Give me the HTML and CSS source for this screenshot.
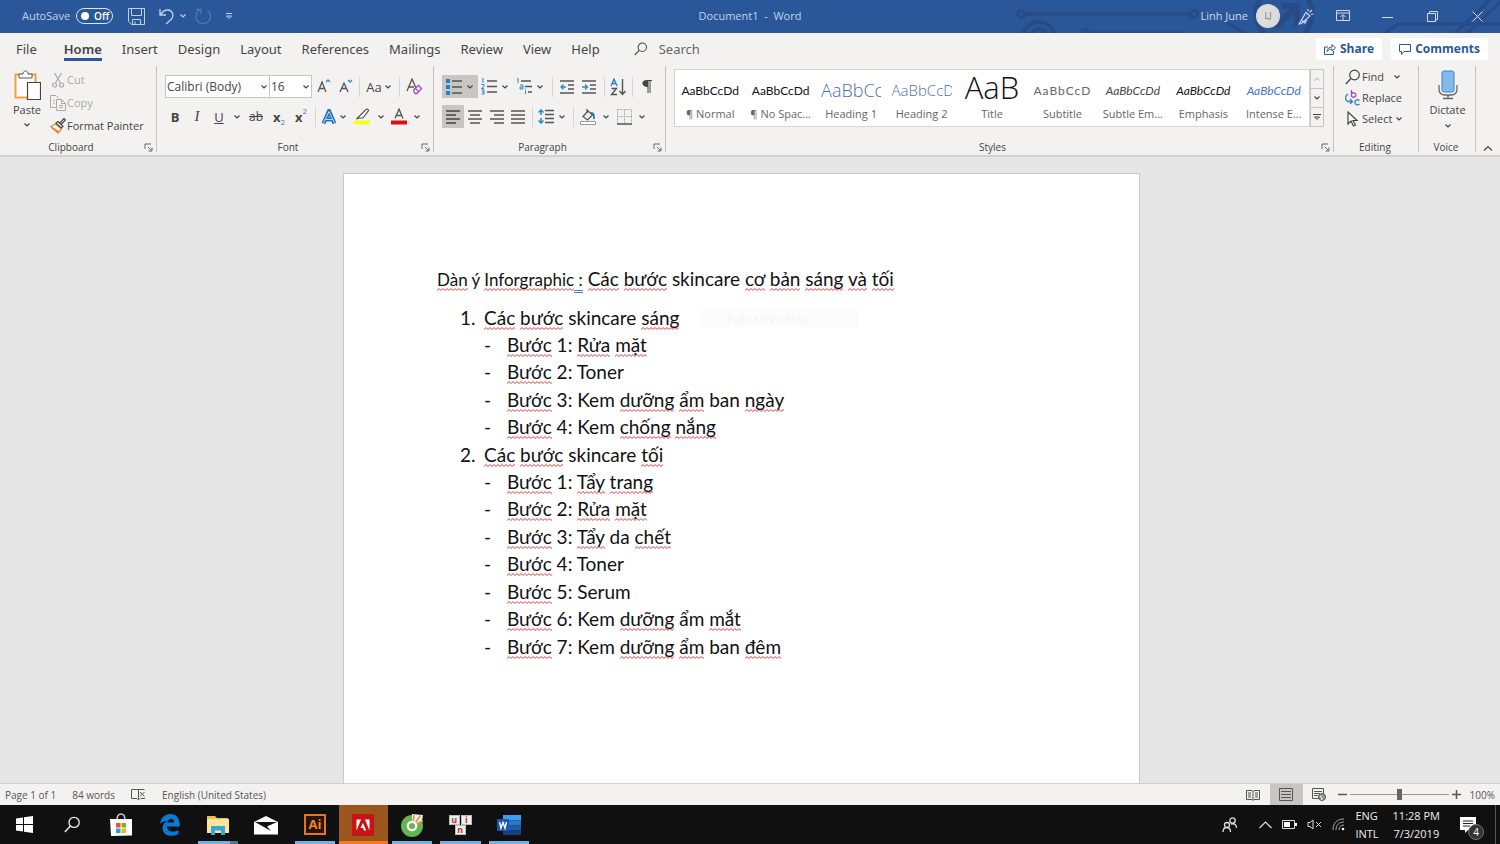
FILE: index.html
```html
<!DOCTYPE html>
<html lang="en">
<head>
<meta charset="utf-8">
<title>Document1 - Word</title>
<link rel="stylesheet" href="styles.css">
</head>
<body>
<svg class="defs" aria-hidden="true">
  <symbol id="chev" viewBox="0 0 8 8"><path d="M1.500 2.500 4 5 6.500 2.500" fill="none" stroke="currentColor" stroke-width="1.200"/></symbol>
  <symbol id="launch" viewBox="0 0 9 9"><path d="M1 6V1h6M4 4l3.500 3.500M8 4.500V8H4.500" fill="none" stroke="currentColor" stroke-width=".8"/></symbol>
  <symbol id="mag" viewBox="0 0 16 16"><circle cx="9.500" cy="6" r="4.800" fill="none" stroke="currentColor" stroke-width="1.200"/><path d="M6 9.500.8 15" stroke="currentColor" stroke-width="1.300"/></symbol>
</svg>
<div class="app">
  <header class="titlebar">
    <svg class="circuit" width="500" height="33" viewBox="0 0 500 33" fill="none" stroke="#264b86" stroke-width="3" aria-hidden="true">
      <circle cx="21" cy="14" r="3.500"/><path d="M25 14h165"/><circle cx="194" cy="14" r="3.500"/>
      <circle cx="39" cy="38" r="16" stroke-width="4"/><circle cx="39" cy="37" r="8" stroke-width="4"/><circle cx="85" cy="32" r="3"/><path d="M89 33h95M227 22l18 12"/>
      <circle cx="284" cy="14" r="28" stroke-width="5"/><path d="M276 27l18-18M282 6h15v20" stroke-width="6"/>
      <path d="M384 34l14-10h102M454 34l36-34M466 34 500 2"/>
    </svg>
    <div class="quick">
      <label class="autosave">AutoSave <span class="toggle"><input type="checkbox"><span>Off</span></span></label>
      <button class="q-save" aria-label="Save"><svg width="17" height="17" viewBox="0 0 17 17" fill="none" stroke="currentColor"><path d="M.5.500h16v16h-13l-3-3zM3.500.500v7h10v-7M4.500 16.500v-5h8v5M7 16v-2.500"/></svg></button>
      <button class="q-undo" aria-label="Undo"><svg width="15" height="17" viewBox="0 0 15 17" fill="none" stroke="currentColor" stroke-width="1.300"><path d="M1 1v6h6M1 7C3.500 3.500 5.500 2 8.500 2c5.500 0 7 6 3.500 9.500L7 16"/></svg><svg width="8" height="8"><use href="#chev"/></svg></button>
      <button class="q-redo" aria-label="Repeat"><svg width="17" height="17" viewBox="0 0 17 17" fill="none" stroke="currentColor" stroke-width="1.300"><path d="M1 1.500h5v5M6 1.500A7.300 7.300 0 1 0 12.500 2.500"/></svg></button>
      <button class="q-more" aria-label="Customize"><svg width="8" height="8" viewBox="0 0 8 8" fill="none" stroke="currentColor"><path d="M1 1.500h6M1.500 4h5L4 6.500z"/></svg></button>
    </div>
    <div class="doc-name">Document1&nbsp; -&nbsp; Word</div>
    <div class="window-tools">
      <span>Linh June</span><span class="avatar">LJ</span>
      <button class="w-pen" aria-label="Coming soon"><svg width="16" height="17" viewBox="0 0 16 17" fill="none" stroke="currentColor" stroke-width="1.200"><path d="M1 16 8 4.500l4 3.500L3.500 15.500zM4 12.500l3 2.500 1.500-3M10 3V1M11.500 4.500 14 2M13 6.500l2.500-.5"/></svg></button>
      <button aria-label="Ribbon display"><svg width="14" height="12" viewBox="0 0 14 12" fill="none" stroke="currentColor"><path d="M.5.500h13v10H.500zM.5 3h13M7 10V5M4.500 7 7 4.500 9.500 7"/></svg></button>
      <button aria-label="Minimize"><svg width="11" height="11" viewBox="0 0 11 11" stroke="currentColor"><path d="M0 6.500h11"/></svg></button>
      <button aria-label="Restore"><svg width="11" height="11" viewBox="0 0 11 11" fill="none" stroke="currentColor"><path d="M.5 2.500h8v8h-8zM2.500 2.500v-2h8v8h-2"/></svg></button>
      <button aria-label="Close"><svg width="11" height="11" viewBox="0 0 11 11" stroke="currentColor"><path d="m.5.500 10 10m0-10-10 10"/></svg></button>
    </div>
  </header>

  <nav class="tabs">
    <button class="file">File</button><button class="current">Home</button><button>Insert</button><button>Design</button><button>Layout</button><button>References</button><button>Mailings</button><button>Review</button><button>View</button><button>Help</button>
    <label class="search"><svg width="14" height="14"><use href="#mag"/></svg><input type="text" placeholder="Search" aria-label="Search"></label>
    <div class="share">
      <button><svg width="12" height="12" viewBox="0 0 12 12" fill="none" stroke="currentColor"><path d="M4 4H.5v7.500h9V8M3 8.500C3.500 5.500 5 4 8 4V1.500L11.500 5 8 8V6C6 6 4.500 6.500 3 8.500z"/></svg>Share</button>
      <button><svg width="12" height="12" viewBox="0 0 12 12" fill="none" stroke="currentColor"><path d="M.5 1.500h11v7H5l-2.500 3v-3h-2z"/></svg>Comments</button>
    </div>
  </nav>

  <section class="ribbon">
    <div class="group clipboard">
      <div class="group-body">
        <button class="paste"><svg width="28" height="31" viewBox="0 0 28 31"><path d="M2.500 4.500h20v23h-20z" fill="#fff" stroke="#eda23f" stroke-width="2"/><path d="M6 8V4h4c0-4 5-4 5 0h4v4z" fill="#fff" stroke="#555"/><path d="M14.500 12.500h13v17h-13z" fill="#fff" stroke="#444" stroke-width="1.200"/></svg>Paste<svg width="8" height="8"><use href="#chev"/></svg></button>
        <div class="stack">
          <button class="disabled"><svg width="16" height="16" viewBox="0 0 16 16" fill="none" stroke="currentColor" stroke-width="1.200"><path d="m4.500 1 6 10M11.500 1l-6 10"/><circle cx="4.500" cy="13" r="2"/><circle cx="11.500" cy="13" r="2"/></svg>Cut</button>
          <button class="disabled"><svg width="16" height="16" viewBox="0 0 16 16" fill="none" stroke="currentColor"><path d="M6 12.500H.500V.500H6L9 3.500M6.500 4.500h5l4 4v7h-9zM11.500 4.500v4h4M9 10.500h4M9 12.500h4M3 5.500h2M3 8h2"/></svg>Copy</button>
          <button><svg width="16" height="16" viewBox="0 0 16 16" fill="none"><path d="M1 8.500 5.500 6l6 5L8 15z" stroke="#ed8733" stroke-width="1.400" fill="#fff"/><path d="M2 10l7 4" stroke="#ed8733" stroke-width="2"/><path d="M6 5 8 3.500l5 5L11 10zM10 5l4-4.500 1.500 1.500-4 4" stroke="#444" stroke-width="1.200" fill="#fff"/></svg>Format Painter</button>
        </div>
      </div>
      <div class="caption"><span>Clipboard</span><button aria-label="Clipboard options"><svg width="9" height="9"><use href="#launch"/></svg></button></div>
    </div>

    <div class="group font">
      <div class="group-body rows">
        <div class="row font-one">
          <span class="combo"><select aria-label="Font"><option>Calibri (Body)</option></select><svg width="8" height="8"><use href="#chev"/></svg></span>
          <span class="combo"><select aria-label="Font size"><option>16</option></select><svg width="8" height="8"><use href="#chev"/></svg></span>
          <button aria-label="Grow font"><svg width="14" height="16" viewBox="0 0 14 16" fill="none" stroke="#555" stroke-width="1.300"><path d="M1 13 5 3l4 10M2.500 9.500h5"/><path d="m9 3 2-2 2 2" stroke="#2a86c8"/></svg></button>
          <button aria-label="Shrink font"><svg width="14" height="16" viewBox="0 0 14 16" fill="none" stroke="#555" stroke-width="1.300"><path d="M1 13 5 4l4 9M2.500 9.500h5"/><path d="m9 1 2 2 2-2" stroke="#2a86c8"/></svg></button>
          <i></i>
          <button class="case">Aa<svg width="8" height="8"><use href="#chev"/></svg></button>
          <i></i>
          <button aria-label="Clear formatting"><svg width="17" height="17" viewBox="0 0 17 17" fill="none" stroke="#555" stroke-width="1.300"><path d="M1 13 6 1l4 9M3 9h5"/><path d="m7.500 12 5-4.500 3 3-4.500 5H9z" fill="#fff" stroke="#a04cb5"/><path d="m9.500 10.500 3 3" stroke="#a04cb5"/></svg></button>
        </div>
        <div class="row font-two">
          <button><b>B</b></button><button class="italic">I</button><button class="under"><u>U</u></button><button aria-label="Underline style"><svg width="8" height="8"><use href="#chev"/></svg></button>
          <button class="strike"><s>ab</s></button><button class="script"><b>x</b><sub>2</sub></button><button class="script"><b>x</b><sup>2</sup></button><i></i>
          <button aria-label="Text effects"><svg width="16" height="16" viewBox="0 0 16 16"><path d="M2.500 14.500 8 2l5.500 12.500M4.500 10.500h7" fill="none" stroke="#2273bd" stroke-width="4"/><path d="M2.500 14 8 2.500 13.500 14M4.500 10.500h7" fill="none" stroke="#b9dcf7" stroke-width="1"/></svg></button><button aria-label="More effects"><svg width="8" height="8"><use href="#chev"/></svg></button>
          <button aria-label="Highlight"><svg width="16" height="17" viewBox="0 0 16 17"><path d="M5 8.500 12 1.500q2-1 2.500 1L9 10H5.500l-3 1z" fill="#fff" stroke="#555" stroke-width="1.200"/><path d="M0 12.500h16v4H0z" fill="#fbfb1d"/></svg></button><button aria-label="Highlight colors"><svg width="8" height="8"><use href="#chev"/></svg></button>
          <button aria-label="Font color"><svg width="16" height="17" viewBox="0 0 16 17"><path d="M4 10.500 8 1l4 9.500M5.500 7.500h5" fill="none" stroke="#555" stroke-width="1.300"/><path d="M0 12.500h16v4H0z" fill="#e30b0b"/></svg></button><button aria-label="Font colors"><svg width="8" height="8"><use href="#chev"/></svg></button>
        </div>
      </div>
      <div class="caption"><span>Font</span><button aria-label="Font options"><svg width="9" height="9"><use href="#launch"/></svg></button></div>
    </div>

    <div class="group paragraph">
      <div class="group-body rows">
        <div class="row para-one">
          <button class="on" aria-label="Bullets"><svg width="16" height="16" viewBox="0 0 16 16"><path d="M0 0h4v4H0zM0 6h4v4H0zM0 12h4v4H0z" fill="#2a7fc0"/><path d="M6 2h10M6 8h10M6 14h10" stroke="#555" stroke-width="1.300"/></svg><svg width="8" height="8"><use href="#chev"/></svg></button>
          <button aria-label="Numbering"><svg width="16" height="17" viewBox="0 0 16 17"><path d="M1 1l1-.5V5M.5 6.500h2.500v2L.500 10.500H3M.500 12H3v4H.500M1 14h2" fill="none" stroke="#2a86c8"/><path d="M6 3h10M6 8.500h10M6 14h10" stroke="#555" stroke-width="1.300"/></svg><svg width="8" height="8"><use href="#chev"/></svg></button>
          <button aria-label="Multilevel list"><svg width="16" height="17" viewBox="0 0 16 17"><path d="M1 1l1-.5V5M4 7h3v4H4V9h3M9.500 12.500V16M9.500 10.500v1" fill="none" stroke="#2a86c8"/><path d="M5 3h10M9 8.500h7M12 14h4" stroke="#555" stroke-width="1.300"/></svg><svg width="8" height="8"><use href="#chev"/></svg></button>
          <i></i>
          <button aria-label="Decrease indent"><svg width="14" height="14" viewBox="0 0 14 14"><path d="M0 1h14M8 5h6M8 9h6M0 13h14" stroke="#555" stroke-width="1.300"/><path d="M6 7H1m2.500-2.500L1 7l2.500 2.500" fill="none" stroke="#2a86c8" stroke-width="1.300"/></svg></button>
          <button aria-label="Increase indent"><svg width="14" height="14" viewBox="0 0 14 14"><path d="M0 1h14M8 5h6M8 9h6M0 13h14" stroke="#555" stroke-width="1.300"/><path d="M0 7h5.500M3 4.500 5.500 7 3 9.500" fill="none" stroke="#2a86c8" stroke-width="1.300"/></svg></button>
          <i></i>
          <button aria-label="Sort"><svg width="16" height="18" viewBox="0 0 16 18" fill="none" stroke-width="1.400"><path d="m1 8 3-7 3 7M2 5.500h4" stroke="#2a86c8"/><path d="M1.500 10.500h5l-5 6h5.500M12.500 1v15M9.500 13l3 3.500 3-3.500" stroke="#555"/></svg></button>
          <i></i>
          <button aria-label="Show marks"><svg width="10" height="13" viewBox="0 0 10 13"><path d="M5 0h5v1H8.500v12h-1V1h-1v12h-1V7C-1 7-1.500 0 5 0z" fill="#444"/></svg></button>
        </div>
        <div class="row para-two">
          <button class="on" aria-label="Align left"><svg width="14" height="14" viewBox="0 0 14 14" stroke="#444" stroke-width="1.300"><path d="M0 1h14M0 5h10M0 9h14M0 13h10"/></svg></button>
          <button aria-label="Center"><svg width="14" height="14" viewBox="0 0 14 14" stroke="#555" stroke-width="1.300"><path d="M0 1h14M2 5h10M0 9h14M2 13h10"/></svg></button>
          <button aria-label="Align right"><svg width="14" height="14" viewBox="0 0 14 14" stroke="#555" stroke-width="1.300"><path d="M0 1h14M4 5h10M0 9h14M4 13h10"/></svg></button>
          <button aria-label="Justify"><svg width="14" height="14" viewBox="0 0 14 14" stroke="#555" stroke-width="1.300"><path d="M0 1h14M0 5h14M0 9h14M0 13h14"/></svg></button>
          <i></i>
          <button aria-label="Line spacing"><svg width="16" height="15" viewBox="0 0 16 15" fill="none" stroke-width="1.300"><path d="M7 1.500h9M7 5.500h9M7 9.500h9M7 13.500h9" stroke="#555"/><path d="M3 1v5M.5 3.500 3 1l2.500 2.500M3 9v5M.5 11.500 3 14l2.500-2.500" stroke="#2a86c8" stroke-width="1.500"/></svg><svg width="8" height="8"><use href="#chev"/></svg></button>
          <i></i>
          <button aria-label="Shading"><svg width="16" height="16" viewBox="0 0 16 16" fill="none"><path d="m3 7.500 5-5.500 4.500 4-5 5zM7 4V0" stroke="#555" stroke-width="1.300"/><path d="M11 4c3 0 3 2 3 6" stroke="#2273bd" stroke-width="1.800"/><path d="M.5 12.500h15v3H.500z" fill="#fff" stroke="#999"/></svg></button><button aria-label="Shading colors"><svg width="8" height="8"><use href="#chev"/></svg></button>
          <button aria-label="Borders"><svg width="15" height="16" viewBox="0 0 15 16" fill="none"><path d="M.5.500h14v14M.5.500v14M7.500.500v14M.5 7.500h14" stroke="#aaa" stroke-dasharray="2 1"/><path d="M0 15h15" stroke="#555" stroke-width="1.500"/></svg></button><button aria-label="Border styles"><svg width="8" height="8"><use href="#chev"/></svg></button>
        </div>
      </div>
      <div class="caption"><span>Paragraph</span><button aria-label="Paragraph options"><svg width="9" height="9"><use href="#launch"/></svg></button></div>
    </div>

    <div class="group styles">
      <div class="group-body">
        <div class="gallery">
          <button><span class="sample">AaBbCcDd</span><span>¶ Normal</span></button>
          <button><span class="sample">AaBbCcDd</span><span>¶ No Spac...</span></button>
          <button><span class="sample h1">AaBbCc</span><span>Heading 1</span></button>
          <button><span class="sample h2">AaBbCcD</span><span>Heading 2</span></button>
          <button><span class="sample title">AaB</span><span>Title</span></button>
          <button><span class="sample subtitle">AaBbCcD</span><span>Subtitle</span></button>
          <button><span class="sample subtle">AaBbCcDd</span><span>Subtle Em...</span></button>
          <button><span class="sample emphasis">AaBbCcDd</span><span>Emphasis</span></button>
          <button><span class="sample intense">AaBbCcDd</span><span>Intense E...</span></button>
        </div>
        <div class="scroller">
          <button class="disabled" aria-label="Up"><svg width="8" height="8" viewBox="0 0 8 8"><path d="M1.500 5.500 4 3l2.500 2.500" fill="none" stroke="currentColor"/></svg></button>
          <button aria-label="Down"><svg width="8" height="8"><use href="#chev"/></svg></button>
          <button aria-label="More styles"><svg width="8" height="8" viewBox="0 0 8 8" fill="none" stroke="currentColor"><path d="M0 1.500h8M1.500 4 4 6.500 6.500 4z"/></svg></button>
        </div>
      </div>
      <div class="caption"><span>Styles</span><button aria-label="Styles options"><svg width="9" height="9"><use href="#launch"/></svg></button></div>
    </div>

    <div class="group editing">
      <div class="group-body"><div class="stack">
        <button><svg width="16" height="16"><use href="#mag"/></svg>Find<svg class="far" width="8" height="8"><use href="#chev"/></svg></button>
        <button><svg width="16" height="16" viewBox="0 0 16 16" fill="none" stroke-width="1.300"><path d="M6.500 0v7M6.500 4c1-2 4.500-1.500 4.500 1s-3.500 3-4.500 1" stroke="#a04cb5"/><path d="M14.500 10.500c-3-2-5 .5-4.500 2.500s3 2.500 4.500 1M3 4C0 6-.5 9 2.500 11.500H7M5 9l2.500 2.500L5 14" stroke="#2a86c8"/></svg>Replace</button>
        <button><svg width="16" height="16" viewBox="0 0 16 16"><path d="M3 1v12l3-3 2.500 5 2-1L8 9.500h4z" fill="#fff" stroke="#444" stroke-width="1.200"/></svg>Select<svg class="near" width="8" height="8"><use href="#chev"/></svg></button>
      </div></div>
      <div class="caption"><span>Editing</span></div>
    </div>

    <div class="group voice">
      <div class="group-body"><button class="dictate"><svg width="20" height="30" viewBox="0 0 20 30" fill="none"><rect x="4" y="1" width="12" height="21" rx="2" fill="#83bbec" stroke="#3c86c6"/><path d="M1 15v4q0 6 6 6h6q6 0 6-6v-4M10 25v3M5 28.500h10" stroke="#666" stroke-width="1.300"/></svg>Dictate<svg width="8" height="8"><use href="#chev"/></svg></button></div>
      <div class="caption"><span>Voice</span></div>
    </div>
    <button class="collapse" aria-label="Collapse ribbon"><svg width="10" height="7" viewBox="0 0 10 7"><path d="m1 5.500 4-4 4 4" fill="none" stroke="currentColor" stroke-width="1.200"/></svg></button>
  </section>

  <main class="workspace">
    <article class="page" lang="vi">
      <div class="snip" aria-hidden="true">Full-screen Snip</div>
      <p class="lead"><small><em>Dàn</em> ý <em>Inforgraphic</em><span class="grammar">&nbsp;:</span></small> <em>Các</em> <em>bước</em> skincare <em>cơ</em> <em>bản</em> <em>sáng</em> <em>và</em> <em>tối</em></p>
      <ol>
        <li><p><em>Các</em> <em>bước</em> skincare <em>sáng</em></p>
          <ul>
            <li><em>Bước</em> 1: <em>Rửa</em> <em>mặt</em></li>
            <li><em>Bước</em> 2: Toner</li>
            <li><em>Bước</em> 3: Kem <em>dưỡng</em> <em>ẩm</em> ban <em>ngày</em></li>
            <li><em>Bước</em> 4: Kem <em>chống</em> <em>nắng</em></li>
          </ul></li>
        <li><p><em>Các</em> <em>bước</em> skincare <em>tối</em></p>
          <ul>
            <li><em>Bước</em> 1: <em>Tẩy</em> <em>trang</em></li>
            <li><em>Bước</em> 2: <em>Rửa</em> <em>mặt</em></li>
            <li><em>Bước</em> 3: <em>Tẩy</em> da <em>chết</em></li>
            <li><em>Bước</em> 4: Toner</li>
            <li><em>Bước</em> 5: Serum</li>
            <li><em>Bước</em> 6: Kem <em>dưỡng</em> ẩm <em>mắt</em></li>
            <li><em>Bước</em> 7: Kem <em>dưỡng</em> <em>ẩm</em> ban <em>đêm</em></li>
          </ul></li>
      </ol>
    </article>
  </main>

  <footer class="status">
    <span>Page 1 of 1</span><span>84 words</span>
    <svg width="15" height="13" viewBox="0 0 15 13" fill="none" stroke="currentColor"><path d="M8 1.500H.500v9H6l1.500 1.500L9 10.500M7.500 2v9M8 1.500h5.500M9 4l4.500 4.500m0-4.500L9 8.500M10 10.500h4"/></svg>
    <span>English (United States)</span>
    <div class="views">
      <button aria-label="Read mode"><svg width="14" height="12" viewBox="0 0 14 12" fill="none" stroke="currentColor"><path d="M.5 1.500H6l1 1 1-1h5.500v9H8l-1 1-1-1H.500zM7 2v9M2 4h3M2 6h3M2 8h3M9 4h3M9 6h3M9 8h3"/></svg></button>
      <button class="on" aria-label="Print layout"><svg width="14" height="13" viewBox="0 0 14 13" fill="none" stroke="currentColor"><path d="M.5.500h13v12H.500zM2 3.500h10M2 6.500h10M2 9.500h10"/></svg></button>
      <button aria-label="Web layout"><svg width="14" height="13" viewBox="0 0 14 13" fill="none" stroke="currentColor"><path d="M7 10.500H.500v-10h11V6M2 3.500h8M2 5.500h6M2 7.500h4"/><circle cx="10" cy="9" r="3.500" fill="#999"/><path d="M8 8q2 1 2 4" stroke="#fff"/></svg></button>
    </div>
    <div class="zoom"><button aria-label="Zoom out"><svg width="9" height="9" viewBox="0 0 9 9"><path d="M0 4.500h9" stroke="currentColor" stroke-width="1.500"/></svg></button><input type="range" value="50" aria-label="Zoom"><button aria-label="Zoom in"><svg width="9" height="9" viewBox="0 0 9 9"><path d="M0 4.500h9M4.500 0v9" stroke="currentColor" stroke-width="1.500"/></svg></button><span>100%</span></div>
  </footer>

  <div class="taskbar">
    <div class="apps">
      <button aria-label="Start"><svg width="17" height="17" viewBox="0 0 17 17" fill="#fff"><path d="M0 2.500 7 1.500V8H0zM8 1.300 17 0v8H8zM0 9h7v6.500l-7-1zM8 9h9v8l-9-1.300z"/></svg></button>
      <button aria-label="Search"><svg width="17" height="17"><use href="#mag"/></svg></button>
      <button aria-label="Store"><svg width="24" height="24" viewBox="0 0 24 24"><path d="M8 7c0-8 8-8 8 0" fill="none" stroke="#ccc" stroke-width="1.500"/><path d="M1 6h22v16.500l-21 .5z" fill="#fff"/><path d="M7 10h4.500v4.500H7z" fill="#e8532b"/><path d="M12.500 10H17v4.500h-4.500z" fill="#7fb51c"/><path d="M7 15.500h4.500V20H7z" fill="#22a2e8"/><path d="M12.500 15.500H17V20h-4.500z" fill="#f5b50c"/></svg></button>
      <button aria-label="Edge"><svg width="20" height="22" viewBox="0 0 20 22"><path d="M0 10C1 3.500 5 0 10.500 0 17 0 20 5 19.800 12.500H7c.2 5.500 7 6.500 11.500 3.500v4C9 24.500 2 20 2.500 13.500 2.800 10 5 8 7.500 7 5 6.800 2 7.500 0 10zm7.500-1.500h6.700C14.200 3.500 8 4 7.500 8.500z" fill="#0a78d6"/></svg></button>
      <button class="running multi" aria-label="File Explorer"><svg width="24" height="20" viewBox="0 0 24 20"><path d="M1 1h8l2 2h11v15H1z" fill="#e7bd57"/><path d="M1 4h22v14H1z" fill="#fbe59b"/><path d="M5 20v-9h14v9h-4v-4.500H9V20z" fill="#38a7d8"/></svg></button>
      <button aria-label="Mail"><svg width="24" height="20" viewBox="0 0 24 20"><path d="M0 7 12 1l12 6v12.500H0z" fill="#fff"/><path d="M1 7h22l-10 4.500 4 4.500L9 11.500z" fill="#111"/></svg></button>
      <button class="running" aria-label="Illustrator"><span class="ai">Ai</span></button>
      <button class="running active" aria-label="Adobe"><svg width="22" height="22" viewBox="0 0 22 22"><path d="M0 0h22v22H0z" fill="#c81414"/><path d="M4.500 5.500h4.500L4.500 16.500zM17.500 5.500H13l4.500 11zM11 9l3.200 7.500H12l-1-2.500H8.500z" fill="#fff"/></svg></button>
      <button class="running" aria-label="Coc Coc"><svg width="24" height="24" viewBox="0 0 24 24"><circle cx="12" cy="13" r="11" fill="#67b453"/><path d="M12 12V1l11 1-1 6z" fill="#f1f1e8"/><path d="m13 11 1-9M14.500 11l6-8.500M16 12l7-4" stroke="#df8d3c" stroke-width="1.500"/><circle cx="12" cy="13" r="4.200" fill="#67b453" stroke="#fff" stroke-width="2.200"/></svg></button>
      <button class="running keys" aria-label="Unikey"><span>u</span><span>i</span><span>n</span></button>
      <button class="running" aria-label="Word"><svg width="24" height="22" viewBox="0 0 24 22"><path d="M6 1h18v5.500H6z" fill="#3f9ded"/><path d="M6 6.500h18v5H6z" fill="#2878cc"/><path d="M6 11.500h18v5H6z" fill="#1c5cae"/><path d="M6 16.500h18V21H6z" fill="#173f81"/><path d="M0 5h12v12H0z" fill="#1c55ac"/><path d="M2.500 8 4 14l2-5.500L8 14l1.500-6" fill="none" stroke="#fff" stroke-width="1.400"/></svg></button>
    </div>
    <div class="tray">
      <svg class="people" width="16" height="16" viewBox="0 0 16 16" fill="none" stroke="#ddd" stroke-width="1.300"><circle cx="10.500" cy="3.500" r="2.700"/><circle cx="5" cy="8" r="2.500"/><path d="M1 15c0-6 7.500-6 7.500 0M9 7c4-1 5.500 1 5.500 4"/></svg>
      <svg width="13" height="8" viewBox="0 0 13 8" fill="none" stroke="#ddd" stroke-width="1.200"><path d="m.5 7 6-6 6 6"/></svg>
      <svg width="15" height="9" viewBox="0 0 15 9"><path d="M.5.500h12v8H.500z" fill="none" stroke="#ddd"/><path d="M2 2h6v5H2zM13 3h2v3h-2z" fill="#fff"/></svg>
      <svg width="15" height="11" viewBox="0 0 15 11" fill="none" stroke="#ddd"><path d="M1 3.500h2L6 1v9L3 7.500H1zM9 3l5 5m0-5L9 8"/></svg>
      <svg width="13" height="13" viewBox="0 0 13 13" fill="none" stroke="#aaa"><path d="M1 12C1 5 5 1 12 1M4 12c0-5 3-8 8-8M7 12c0-3 2-5 5-5"/><circle cx="11" cy="11" r="1.300" fill="#fff" stroke="none"/></svg>
      <span class="lang">ENG<br>INTL</span>
      <span class="clock">11:28 PM<br>7/3/2019</span>
      <button class="notice" aria-label="Notifications"><svg width="16" height="16" viewBox="0 0 16 16"><path d="M0 0h16v13H8l-3 3v-3H0z" fill="#fff"/><path d="M3 4h10M3 6.500h10M3 9h7" stroke="#222"/></svg><span>4</span></button>
    </div>
  </div>
</div>
</body>
</html>
```
FILE: styles.css
```css
* { box-sizing: border-box; }
body { margin: 0; font: 12px/16px "Open Sans", "Noto Sans", sans-serif; color: #444; }
button { margin: 0; padding: 0; border: 0; background: none; color: inherit; font: inherit; display: flex; align-items: center; justify-content: center; white-space: nowrap; }
p, ol, ul { margin: 0; padding: 0; list-style: none; }
svg { flex: none; display: block; }
.defs { position: absolute; width: 0; height: 0; }
.app { min-height: 100vh; display: flex; flex-direction: column; background: #e6e6e6; }

.titlebar { position: relative; height: 33px; padding-bottom: 1px; display: grid; grid-template-columns: 1fr auto 1fr; align-items: center; background: #2a579a; color: #c3d1e8; font-size: 11px; overflow: hidden; }
.circuit { position: absolute; right: 0; top: 0; }
.quick { display: flex; align-items: center; padding-left: 22px; }
.autosave { display: flex; align-items: center; gap: 6px; }
.toggle { width: 37px; height: 16px; border: 1px solid #dde6f3; border-radius: 8px; display: flex; align-items: center; gap: 5px; padding-left: 4px; font-size: 10px; font-weight: 600; color: #fff; }
.toggle input { appearance: none; margin: 0; width: 8px; height: 8px; border-radius: 4px; background: #fff; }
.q-save { width: 46px; }
.q-undo { width: 28px; gap: 5px; }
.q-redo { width: 32px; color: #5076b0; }
.q-more { width: 20px; }
.window-tools { position: relative; display: flex; align-items: center; justify-content: flex-end; color: #cfd9ea; }
.window-tools button { width: 45px; height: 32px; }
.window-tools .w-pen { width: 28px; }
.avatar { width: 24px; height: 24px; margin: 0 12px 0 8px; border-radius: 12px; background: #dcdcdc; color: #777; font-size: 9px; line-height: 24px; text-align: center; }

.tabs { height: 31px; display: flex; align-items: stretch; gap: 20px; padding: 0 12px 0 16px; background: #f3f2f1; }
.tabs > button, .search { font-family: "Noto Sans", sans-serif; font-size: 13px; }
.tabs > button { position: relative; }
.tabs .file { margin-right: 7px; }
.tabs .current { font-weight: 600; }
.current::after { content: ""; position: absolute; left: 0; right: 0; bottom: 3px; height: 3px; background: #2b579a; }
.search { display: flex; align-items: center; gap: 11px; margin-left: 14px; }
.search input { width: 80px; border: 0; padding: 0; background: none; font: inherit; }
.search input::placeholder { color: #666; opacity: 1; }
.share { display: flex; align-items: center; gap: 9px; margin-left: auto; padding-top: 1px; color: #2b579a; font-weight: 700; }
.share button { height: 22px; padding: 0 8px; gap: 4px; background: #fff; border-radius: 2px; }

.ribbon { height: 93px; display: flex; background: #f3f2f1; border-bottom: 2px solid #d2d2d2; padding-top: 2px; }
.group { display: flex; flex-direction: column; position: relative; font-size: 11px; }
.group::after { content: ""; position: absolute; right: 0; top: 0; height: 86px; width: 1px; background: #c3c2c1; }
.group-body { height: 74px; display: flex; padding-left: 8px; }
.caption { height: 16px; display: flex; padding-right: 3px; align-items: center; font-size: 10px; }
.caption span { flex: 1; text-align: center; }
.caption button { width: 12px; }
.rows { flex-direction: column; padding-top: 9px; gap: 7px; }
.row { display: grid; height: 23px; align-items: stretch; }
.row i { width: 1px; height: 20px; background: #d6d5d4; align-self: center; justify-self: center; }
.row button { gap: 4px; }
.on { background: #c8c6c4; }
.disabled { color: #a9a9a9; }
.clipboard { width: 157px; }
.font { width: 277px; }
.paragraph { width: 232px; }
.styles { flex: 1; min-width: 0; }
.editing { width: 85px; }
.voice { width: 57px; }
.paste, .dictate { flex-direction: column; justify-content: flex-start; width: 38px; padding-top: 4px; gap: 1px; }
.paste svg:last-child, .dictate svg:last-child { margin-top: 2px; }
.stack { display: flex; flex-direction: column; padding: 2px 0 0 4px; }
.stack button { height: 23px; gap: 1px; justify-content: flex-start; }
.editing .stack { padding: 0 0 0 3px; }
.editing .stack button { height: 21px; }
.stack .far { margin-left: 8px; }
.stack .near { margin-left: 2px; }

.font-one { grid-template-columns: 105px 42px 24px 20px 6px 34px 6px 24px; }
.font-two { grid-template-columns: 20px 24px 20px 16px 22px 24px 20px 8px 20px 8px 30px 8px 28px 8px; }
.combo { position: relative; border: 1px solid #c8c6c4; background: #fff; display: flex; align-items: center; font-size: 12px; }
.combo + .combo { border-left: 0; }
.combo select { appearance: none; width: 100%; border: 0; padding: 0 1px; background: none; color: #444; font: inherit; }
.combo svg { position: absolute; right: 1px; }
.row .case { font-size: 13px; gap: 2px; }
.font-two b { font-size: 13px; }
.italic { font: italic 15px "Liberation Serif", serif; }
.under { font-size: 13px; }
.strike { font-size: 12px; }
.row .script { gap: 0; }
.script sub, .script sup { font-size: 8px; line-height: 8px; color: #2a86c8; padding: 2px 0; }
.script sub { align-self: flex-end; }
.script sup { align-self: flex-start; }
.para-one { grid-template-columns: 36px 34px 36px 8px 22px 22px 8px 20px 8px 22px; }
.para-two { grid-template-columns: 22px 22px 22px 20px 8px 32px 10px 20px 16px 20px 16px; }

.styles .group-body { padding: 3px 10px 12px 8px; }
.gallery { flex: 1; min-width: 0; display: grid; grid-template-columns: repeat(9, 1fr); background: #fff; border: 1px solid #d6d5d4; }
.gallery button { flex-direction: column; min-width: 0; overflow: hidden; color: #666; justify-content: flex-start; padding: 0 5px; }
.sample { height: 36px; line-height: 41px; width: 60px; overflow: hidden; color: #111; font-family: Lato, "Open Sans", sans-serif; font-size: 12px; text-align: center; }
.h1, .h2 { color: #4a6fb0; font-family: "Open Sans", sans-serif; font-weight: 300; text-align: left; }
.h1 { font-size: 18px; }
.h2 { font-size: 15px; }
.title { font: 300 31px/34px "Open Sans", sans-serif; overflow: visible; }
.subtitle { color: #666; letter-spacing: 1px; }
.subtle, .emphasis, .intense { font-style: italic; }
.subtle { color: #444; }
.intense { color: #4472c4; }
.scroller { width: 14px; display: flex; flex-direction: column; }
.scroller button { flex: 1; border: 1px solid #c8c6c4; margin-top: -1px; }
.scroller button:first-child { margin-top: 0; }
.voice .group-body { padding-left: 0; justify-content: center; }
.dictate { gap: 2px; }
.collapse { flex: none; width: 24px; align-items: flex-end; padding-bottom: 3px; }

.workspace { flex: 1; display: flex; justify-content: center; padding: 16px 17px 0 0; }
.page { position: relative; width: 797px; padding: 91px 93px 0; background: #fff; border: 1px solid #c9c9c9; border-bottom: 0; color: #111; font: 19px/28px Lato, "Open Sans", sans-serif; }
.page em { font-style: normal; padding-bottom: 1px; background: url("data:image/svg+xml,%3Csvg xmlns='http://www.w3.org/2000/svg' width='4' height='3'%3E%3Cpath d='M-1 3.500 0 2.500 2 .5 4 2.500 5 3.500' fill='none' stroke='%23e0393e'/%3E%3C/svg%3E") repeat-x left bottom; }
.page small { font-size: 17px; }
.grammar { border-bottom: 3px double #4a7fd0; }
.lead { margin-bottom: 10px; }
.page ol > li { counter-increment: section; padding-left: 47px; line-height: 27px; }
.page ol p::before { content: counter(section) "."; float: left; margin-left: -24px; }
.page ul { padding-left: 23px; }
.page ol ul li { padding: 0; counter-increment: none; }
.page ul li:nth-child(even) { line-height: 28px; }
.page ul li::before { content: "-"; float: left; margin-left: -23px; }
.snip { position: absolute; left: 356px; top: 135px; width: 159px; height: 19px; padding-left: 27px; background: #fcfcfe; color: #f3f3f5; font: 11px/19px "Open Sans", sans-serif; }

.status { height: 22px; display: flex; align-items: center; gap: 16px; padding: 0 5px; background: #f3f2f1; border-top: 1px solid #cfcfcf; font-size: 10px; color: #555; }
.views { display: flex; align-self: stretch; margin-left: auto; }
.views button { width: 33px; }
.zoom { display: flex; align-items: center; gap: 3px; margin-left: -14px; }
.zoom input { appearance: none; width: 99px; height: 12px; margin: 0; background: linear-gradient(#999, #999) center / 100% 1px no-repeat; }
.zoom input::-webkit-slider-thumb { appearance: none; width: 5px; height: 11px; background: #666; }
.zoom span { margin-left: 6px; }

.taskbar { height: 39px; display: flex; justify-content: space-between; background: #101010; color: #eee; }
.apps { width: 533px; display: grid; grid-template-columns: repeat(11, 1fr); }
.apps button { position: relative; }
.running::after { content: ""; position: absolute; left: 4px; right: 4px; bottom: 0; height: 3px; background: #76b0e3; }
.multi::after { border-right: 8px solid #4c7598; }
.active { background: #9b561f; }
.active::after { left: 0; right: 0; background: #f87b1b; }
.ai { width: 22px; height: 21px; border: 2px solid #e8741d; background: #261300; color: #f08427; font: 700 13px/17px "Open Sans", sans-serif; }
.apps .keys { display: grid; grid-template-columns: 11px 11px; gap: 0 1px; align-content: center; justify-content: center; }
.keys span { width: 11px; height: 10px; background: #eee; border: 1px solid #bbb; color: #c33; font: 700 9px/7px "Open Sans", sans-serif; }
.keys span:last-child { grid-column: 1 / 3; justify-self: center; }
.tray { display: flex; align-items: center; gap: 10px; padding-right: 4px; }
.people { margin-right: 11px; }
.lang, .clock { font-size: 11px; line-height: 18px; }
.clock { text-align: center; margin-left: 4px; }
.notice { position: relative; width: 56px; align-self: stretch; margin-left: -10px; border-right: 1px solid #555; }
.notice span { position: absolute; left: 28px; top: 19px; width: 16px; height: 16px; border-radius: 8px; background: #333; border: 1px solid #777; font-size: 10px; line-height: 14px; color: #fff; }
```
